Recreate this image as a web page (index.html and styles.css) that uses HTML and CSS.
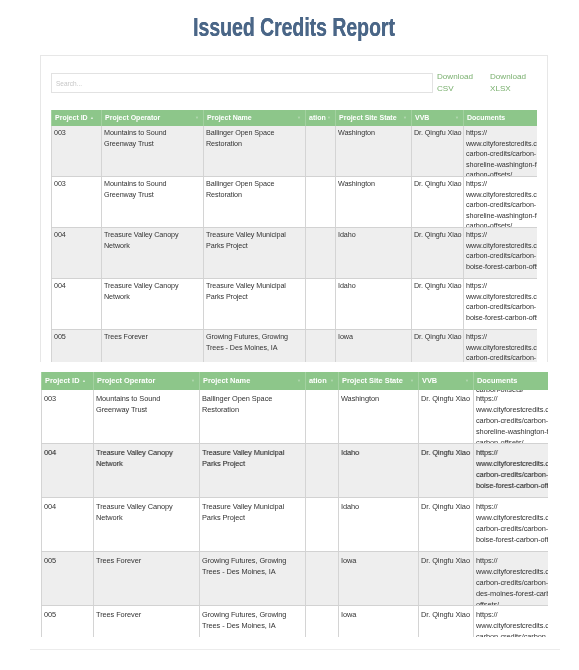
FILE: index.html
```html
<!DOCTYPE html>
<html>
<head>
<meta charset="utf-8">
<title>Issued Credits Report</title>
<link rel="stylesheet" href="styles.css">
</head>
<body>
<div class="title-wrap"><h1 class="title">Issued Credits Report</h1></div>

<div class="card">
  <div class="toolbar">
    <input class="search" type="text" placeholder="Search...">
    <a class="dl dl-first">Download<br>CSV</a>
    <a class="dl">Download<br>XLSX</a>
  </div>
  <div class="tbl tbl-top">
    <div class="row head">
      <div class="cell"><span>Project ID</span><span class="sort up">▲</span></div>
      <div class="cell"><span>Project Operator</span><span class="sort">▼</span></div>
      <div class="cell"><span>Project Name</span><span class="sort">▼</span></div>
      <div class="cell"><span>ation</span><span class="sort">▼</span></div>
      <div class="cell"><span>Project Site State</span><span class="sort">▼</span></div>
      <div class="cell"><span>VVB</span><span class="sort">▼</span></div>
      <div class="cell"><span>Documents</span></div>
    </div>
    <div class="row alt">
      <div class="cell">003</div>
      <div class="cell">Mountains to Sound<br>Greenway Trust</div>
      <div class="cell">Ballinger Open Space<br>Restoration</div>
      <div class="cell"></div>
      <div class="cell">Washington</div>
      <div class="cell">Dr. Qingfu Xiao</div>
      <div class="cell">https://<br>www.cityforestcredits.com/<br>carbon-credits/carbon-<br>shoreline-washington-forest-<br>carbon-offsets/</div>
    </div>
    <div class="row">
      <div class="cell">003</div>
      <div class="cell">Mountains to Sound<br>Greenway Trust</div>
      <div class="cell">Ballinger Open Space<br>Restoration</div>
      <div class="cell"></div>
      <div class="cell">Washington</div>
      <div class="cell">Dr. Qingfu Xiao</div>
      <div class="cell">https://<br>www.cityforestcredits.com/<br>carbon-credits/carbon-<br>shoreline-washington-forest-<br>carbon-offsets/</div>
    </div>
    <div class="row alt">
      <div class="cell">004</div>
      <div class="cell">Treasure Valley Canopy<br>Network</div>
      <div class="cell">Treasure Valley Municipal<br>Parks Project</div>
      <div class="cell"></div>
      <div class="cell">Idaho</div>
      <div class="cell">Dr. Qingfu Xiao</div>
      <div class="cell">https://<br>www.cityforestcredits.com/<br>carbon-credits/carbon-<br>boise-forest-carbon-offsets/</div>
    </div>
    <div class="row">
      <div class="cell">004</div>
      <div class="cell">Treasure Valley Canopy<br>Network</div>
      <div class="cell">Treasure Valley Municipal<br>Parks Project</div>
      <div class="cell"></div>
      <div class="cell">Idaho</div>
      <div class="cell">Dr. Qingfu Xiao</div>
      <div class="cell">https://<br>www.cityforestcredits.com/<br>carbon-credits/carbon-<br>boise-forest-carbon-offsets/</div>
    </div>
    <div class="row alt">
      <div class="cell">005</div>
      <div class="cell">Trees Forever</div>
      <div class="cell">Growing Futures, Growing<br>Trees - Des Moines, IA</div>
      <div class="cell"></div>
      <div class="cell">Iowa</div>
      <div class="cell">Dr. Qingfu Xiao</div>
      <div class="cell">https://<br>www.cityforestcredits.com/<br>carbon-credits/carbon-<br>des-moines-forest-carbon-<br>offsets/</div>
    </div>
  </div>
</div>

<div class="tbl tbl-bot">
  <div class="row head">
    <div class="cell"><span>Project ID</span><span class="sort up">▲</span></div>
    <div class="cell"><span>Project Operator</span><span class="sort">▼</span></div>
    <div class="cell"><span>Project Name</span><span class="sort">▼</span></div>
    <div class="cell"><span>ation</span><span class="sort">▼</span></div>
    <div class="cell"><span>Project Site State</span><span class="sort">▼</span></div>
    <div class="cell"><span>VVB</span><span class="sort">▼</span></div>
    <div class="cell"><span>Documents</span></div>
  </div>
  <div class="row">
    <div class="cell">003</div>
    <div class="cell">Mountains to Sound<br>Greenway Trust</div>
    <div class="cell">Ballinger Open Space<br>Restoration</div>
    <div class="cell"></div>
    <div class="cell">Washington</div>
    <div class="cell">Dr. Qingfu Xiao</div>
    <div class="cell"><div class="bleed">carbon-offsets/</div>https://<br>www.cityforestcredits.com/<br>carbon-credits/carbon-<br>shoreline-washington-forest-<br>carbon-offsets/</div>
  </div>
  <div class="row alt ghost">
    <div class="cell">004</div>
    <div class="cell">Treasure Valley Canopy<br>Network</div>
    <div class="cell">Treasure Valley Municipal<br>Parks Project</div>
    <div class="cell"></div>
    <div class="cell">Idaho</div>
    <div class="cell">Dr. Qingfu Xiao</div>
    <div class="cell">https://<br>www.cityforestcredits.com/<br>carbon-credits/carbon-<br>boise-forest-carbon-offsets/</div>
  </div>
  <div class="row">
    <div class="cell">004</div>
    <div class="cell">Treasure Valley Canopy<br>Network</div>
    <div class="cell">Treasure Valley Municipal<br>Parks Project</div>
    <div class="cell"></div>
    <div class="cell">Idaho</div>
    <div class="cell">Dr. Qingfu Xiao</div>
    <div class="cell">https://<br>www.cityforestcredits.com/<br>carbon-credits/carbon-<br>boise-forest-carbon-offsets/</div>
  </div>
  <div class="row alt">
    <div class="cell">005</div>
    <div class="cell">Trees Forever</div>
    <div class="cell">Growing Futures, Growing<br>Trees - Des Moines, IA</div>
    <div class="cell"></div>
    <div class="cell">Iowa</div>
    <div class="cell">Dr. Qingfu Xiao</div>
    <div class="cell">https://<br>www.cityforestcredits.com/<br>carbon-credits/carbon-<br>des-moines-forest-carbon-<br>offsets/</div>
  </div>
  <div class="row">
    <div class="cell">005</div>
    <div class="cell">Trees Forever</div>
    <div class="cell">Growing Futures, Growing<br>Trees - Des Moines, IA</div>
    <div class="cell"></div>
    <div class="cell">Iowa</div>
    <div class="cell">Dr. Qingfu Xiao</div>
    <div class="cell">https://<br>www.cityforestcredits.com/<br>carbon-credits/carbon-<br>des-moines-forest-carbon-<br>offsets/</div>
  </div>
</div>

<div class="footer-line"></div>
</body>
</html>
```

FILE: styles.css
```css
body {
  margin: 0;
  width: 579px;
  background: #ffffff;
  font-family: "Liberation Sans", Arial, sans-serif;
  color: #333333;
}

.title-wrap {
  width: 508px;
  height: 55px;
  margin-left: 40px;
  padding-top: 12px;
  box-sizing: border-box;
  text-align: center;
  will-change: transform;
}

.title {
  display: inline-block;
  margin: 0;
  font-size: 25px;
  line-height: 30px;
  font-weight: 700;
  color: #4a6687;
  white-space: nowrap;
  transform: scaleX(0.777);
  text-shadow: 0.4px 0 0 #4a6687;
}

.card {
  margin-left: 40px;
  width: 508px;
  height: 307px;
  box-sizing: border-box;
  border: 1px solid #e7e7e7;
  border-bottom: none;
  padding: 17px 0 0 10px;
  overflow: hidden;
  will-change: transform;
}

.toolbar {
  display: flex;
  align-items: flex-start;
  height: 20px;
}

.search {
  width: 382px;
  height: 20px;
  margin: 0;
  box-sizing: border-box;
  border: 1px solid #e2e2e2;
  padding: 0 0 0 4px;
  font-family: "Liberation Sans", Arial, sans-serif;
  font-size: 6.5px;
  color: #bbbbbb;
  outline: none;
  background: #fff;
}

.search::placeholder {
  color: #c6c6c6;
}

.dl {
  margin-top: -2px;
  width: 53px;
  flex: none;
  font-size: 8.1px;
  line-height: 12px;
  color: #7ab06f;
  text-decoration: none;
}

.dl-first {
  margin-left: 4px;
}

.tbl {
  overflow: hidden;
}

.tbl-top {
  margin-top: 17px;
  width: 486px;
}

.row {
  display: grid;
  box-sizing: border-box;
  border-bottom: 1px solid #d2d2d2;
  background: #ffffff;
}

.row.alt {
  background: #eeeeee;
}

.cell {
  box-sizing: border-box;
  border-left: 1px solid #d4d4d4;
  padding: 2px 2px 0;
  overflow: hidden;
  white-space: nowrap;
  letter-spacing: -0.08px;
}

.head {
  background: #8dc68a;
  color: #ffffff;
  font-weight: 700;
  border-bottom: none;
}

.head .cell {
  display: flex;
  align-items: center;
  justify-content: space-between;
  padding: 0 3px;
  border-left-color: #a3d1a0;
  letter-spacing: 0;
}

.sort {
  font-size: 4px;
  color: rgba(255, 255, 255, 0.35);
  margin-right: 1px;
}

.sort.up {
  color: rgba(255, 255, 255, 0.7);
  margin-right: 4px;
}

/* top table */
.tbl-top .row {
  grid-template-columns: 50px 102px 102px 30px 76px 52px 130px;
  height: 51px;
}

.tbl-top .row.head {
  height: 16px;
}

.tbl-top .cell {
  font-size: 7.2px;
  line-height: 10.6px;
}

.tbl-top .head .cell {
  font-size: 7px;
  line-height: 16px;
}

/* bottom table */
.tbl-bot {
  margin-top: 10px;
  margin-left: 41px;
  width: 507px;
  height: 265px;
  will-change: transform;
}

.tbl-bot .row {
  grid-template-columns: 52px 106px 106px 33px 80px 55px 130px;
  height: 54px;
}

.tbl-bot .row.head {
  height: 18px;
}

.tbl-bot .cell {
  font-size: 7.4px;
  line-height: 11px;
  padding-top: 3px;
}

.tbl-bot .head .cell {
  font-size: 7.4px;
  line-height: 18px;
  padding-top: 0;
}

.bleed {
  margin-top: -9px;
  margin-bottom: -2px;
}

.ghost .cell {
  text-shadow: 0.7px 0 0 rgba(51, 51, 51, 0.3);
}

.footer-line {
  margin-top: 12px;
  margin-left: 30px;
  width: 530px;
  height: 1px;
  background: #ececec;
}
```
